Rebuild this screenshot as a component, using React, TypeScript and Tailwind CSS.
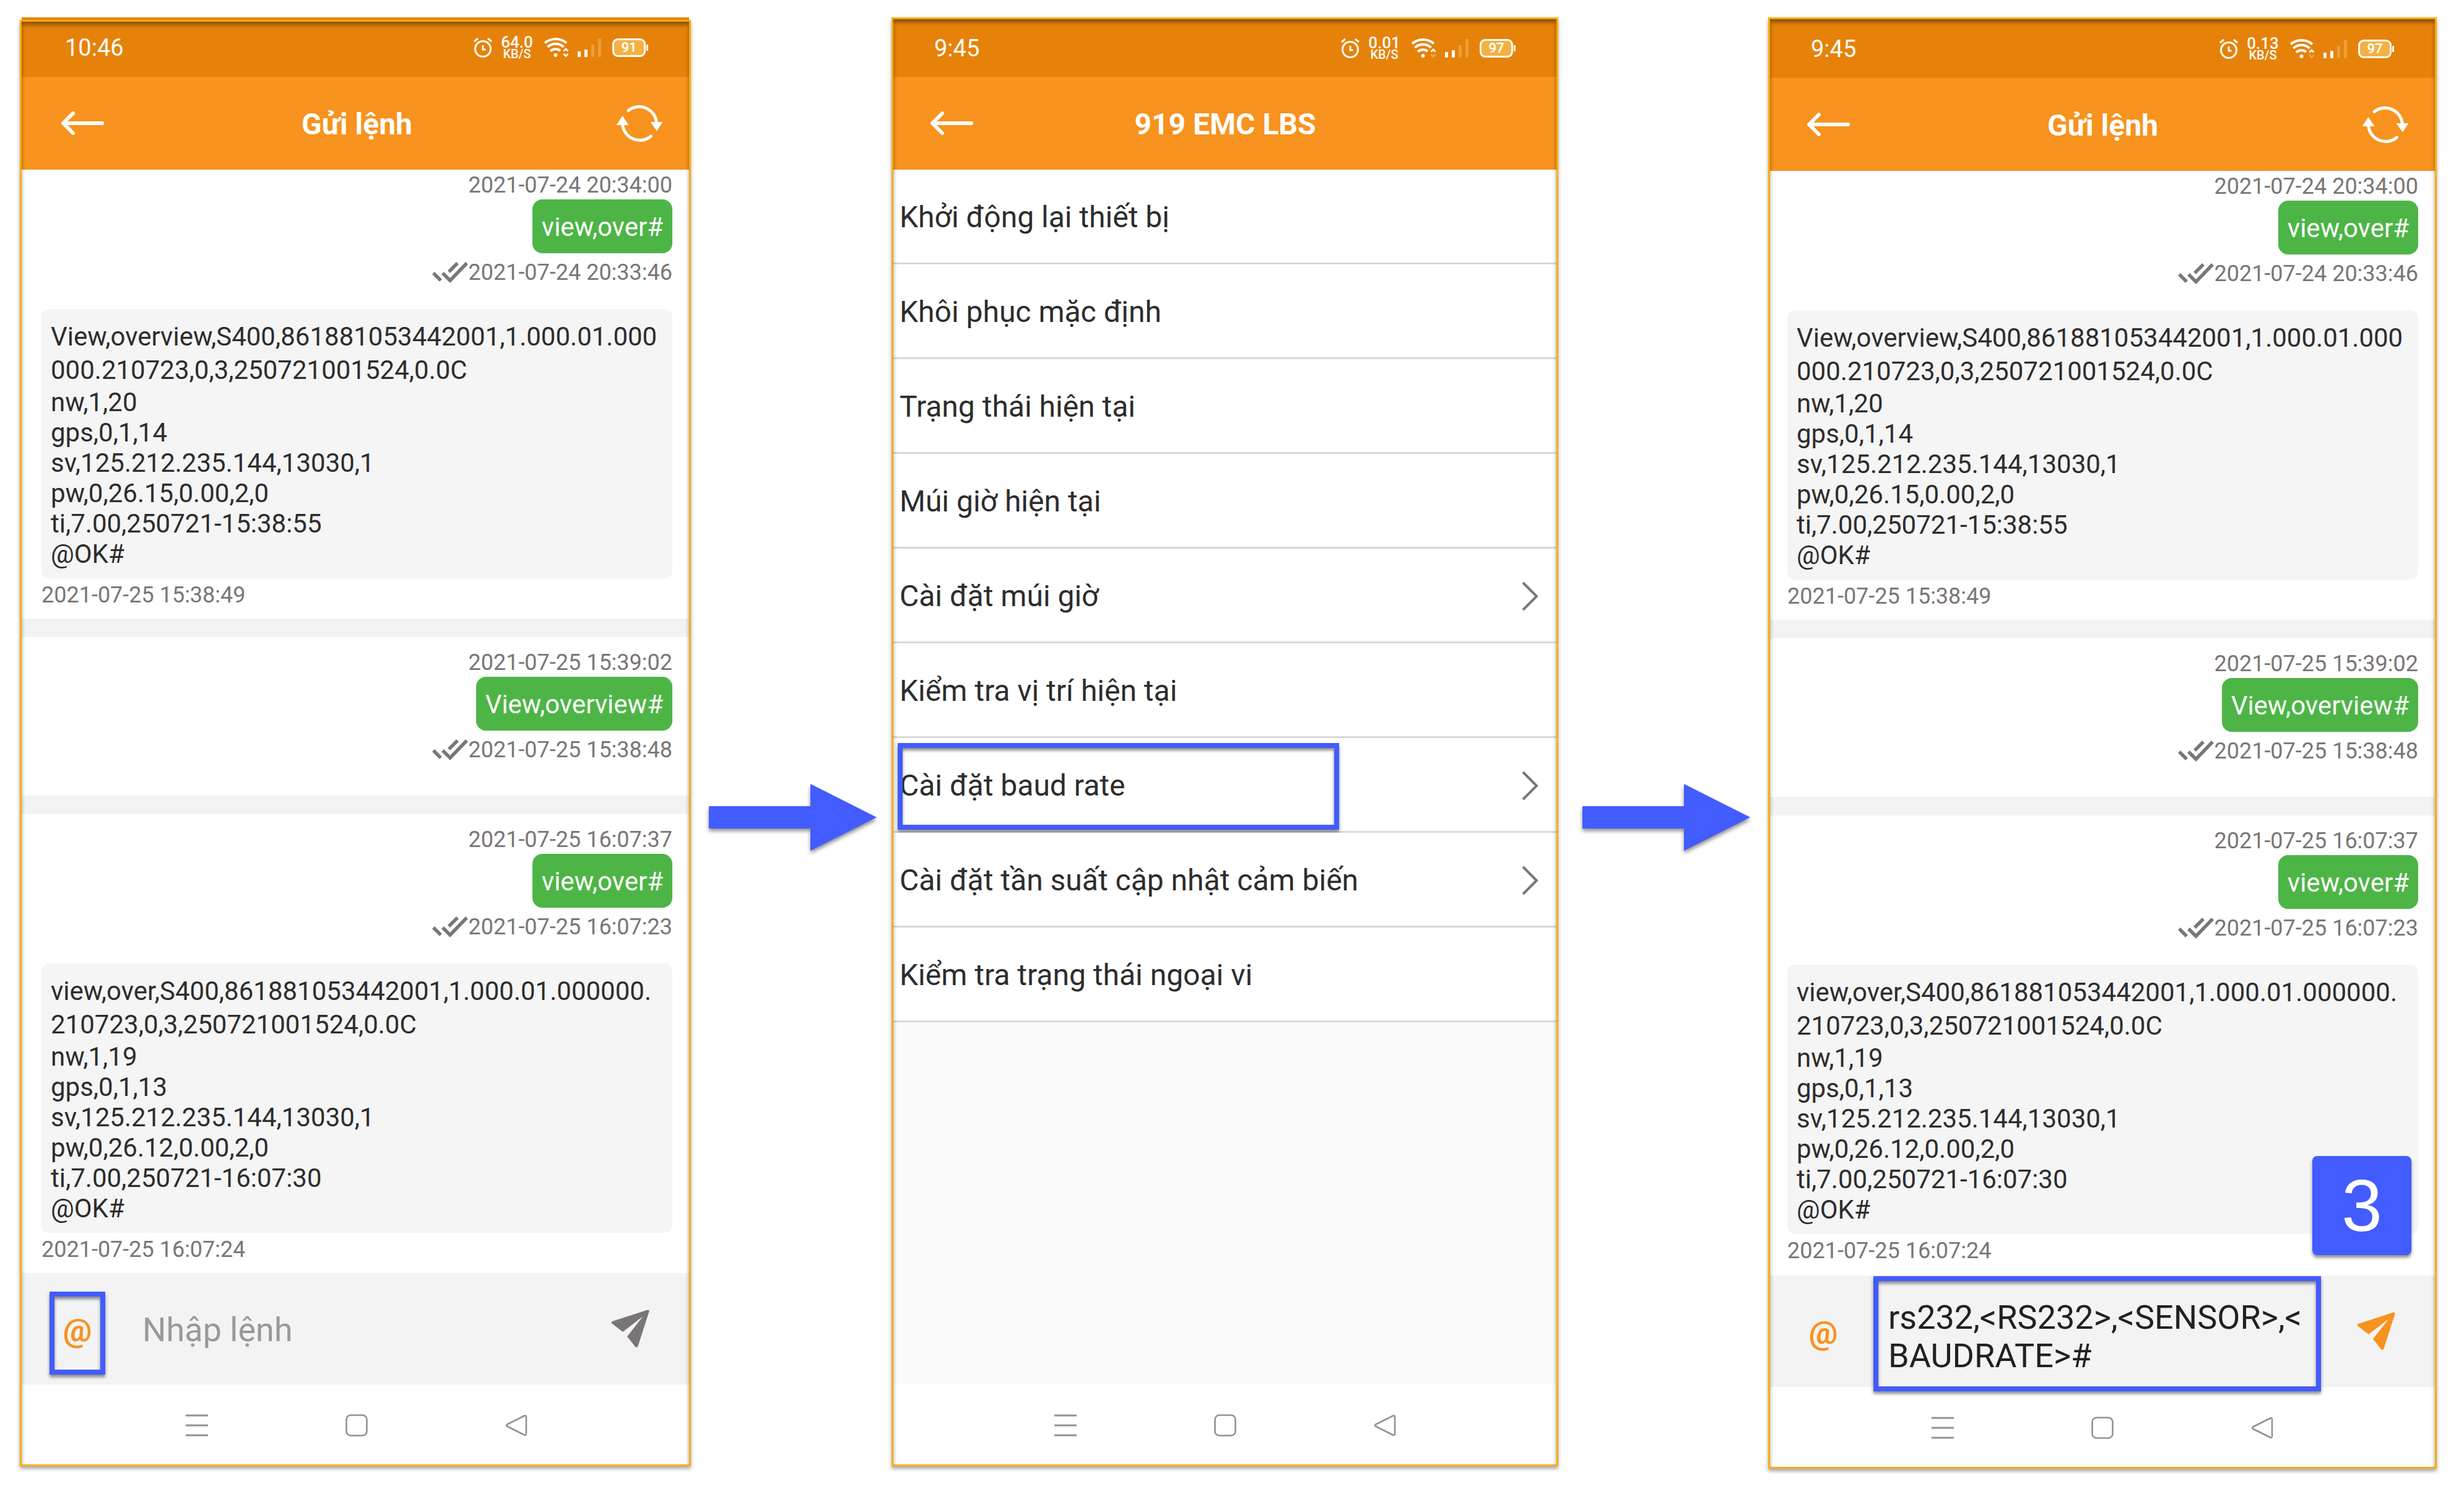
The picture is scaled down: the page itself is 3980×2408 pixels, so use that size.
import React from "react";

type StatusProps = { time: string; rate: string; battery: string; upOnly?: boolean; className: string };

const AlarmIcon = () => (
  <svg viewBox="0 0 30 32" className="h-8 w-[30px]" fill="none" stroke="#fff" strokeWidth="3">
    <circle cx="15" cy="18" r="12.5" />
    <path d="M15 12v7h4.500M1 6l6-5M29 6l-6-5" />
  </svg>
);

const WifiIcon = ({ upOnly }: { upOnly?: boolean }) => (
  <svg viewBox="0 0 40 32" className="h-8 w-10" fill="none" stroke="#fff" strokeWidth="4">
    <path d="M1 8.500a27 27 0 0 1 35 0M5.500 15a19 19 0 0 1 26 0M10 21.500a12 12 0 0 1 16 -.5" />
    <circle cx="18.500" cy="28" r="3" fill="#fff" stroke="none" />
    <path d="M31.500 21.500l3.500-3.500 3.500 3.500" strokeWidth="2.800" />
    <path d="M31.500 26l3.500 3.500 3.500-3.500" strokeWidth="2.800" opacity={upOnly ? 0.3 : 1} />
  </svg>
);

const SignalIcon = () => (
  <svg viewBox="0 0 39 30" className="h-[30px] w-[39px]" fill="#fff">
    <rect x="0" y="21" width="5" height="9" rx="1" />
    <rect x="11" y="18" width="5" height="12" rx="1" />
    <rect x="22" y="10" width="5" height="20" rx="1" opacity=".22" />
    <rect x="33" y="0" width="5" height="30" rx="1" opacity=".22" />
  </svg>
);

const StatusBar = ({ time, rate, battery, upOnly, className }: StatusProps) => (
  <div className={`flex shrink-0 items-center justify-between bg-[#e68209] pr-[66px] pl-[calc(66px+var(--inset))] text-white ${className}`}>
    <span className="text-[38px] leading-[44px]">{time}</span>
    <div className="flex items-center">
      <AlarmIcon />
      <div className="ml-[14px] w-[52px] text-center font-medium">
        <div className="text-[26px] leading-[20px]">{rate}</div>
        <div className="text-[20px] leading-[18px]">KB/S</div>
      </div>
      <div className="ml-[18px]"><WifiIcon upOnly={upOnly} /></div>
      <div className="ml-[14px]"><SignalIcon /></div>
      <div className="ml-[17px] flex h-[30px] w-[54px] items-center justify-center rounded-[9px] border-[3px] border-white bg-[#f4b243] text-[22px] leading-[24px] font-semibold">
        {battery}
      </div>
      <div className="ml-px h-[10px] w-[3px] bg-white" />
    </div>
  </div>
);

const Header = ({ title, refresh }: { title: string; refresh?: boolean }) => (
  <header className="grid h-[150px] shrink-0 grid-cols-[1fr_auto_1fr] items-center bg-[#f7931e] pr-[42px] pl-[calc(59px+var(--inset))] text-white">
    <button aria-label="Back" className="w-[72px]">
      <svg viewBox="0 0 72 40" className="h-10 w-[72px]" fill="none" stroke="#fff" strokeWidth="6" strokeLinecap="round" strokeLinejoin="round">
        <path d="M67 20H4M20 4L4 20l16 16" />
      </svg>
    </button>
    <h1 className="pt-1 pr-[16px] text-[48px] leading-[60px] font-bold">{title}</h1>
    {refresh ? (
      <button aria-label="Refresh" className="justify-self-end">
        <svg viewBox="0 0 76 62" className="h-[62px] w-[76px]" fill="none" stroke="#fff" strokeWidth="5" strokeLinecap="round">
          <path d="M20 10.500a28 28 0 0 1 45.500 21M10.500 31a28 28 0 0 0 46 21" />
          <path d="M55.500 29h20L66 43.500zM.5 34h20L10.500 19z" fill="#fff" stroke="none" />
        </svg>
      </button>
    ) : (
      <span />
    )}
  </header>
);

const NavBar = () => (
  <nav className="flex shrink-0 justify-center gap-[222px] pt-12 pb-[45px] pl-(--inset)">
    <button aria-label="Recent apps">
      <svg viewBox="0 0 36 36" className="size-9" stroke="#929292" strokeWidth="3"><path d="M0 2h36M0 18h36M0 34h36" /></svg>
    </button>
    <button aria-label="Home">
      <svg viewBox="0 0 36 36" className="size-9" fill="none" stroke="#929292" strokeWidth="2.600"><rect x="1.500" y="1.500" width="33" height="33" rx="7" /></svg>
    </button>
    <button aria-label="Back">
      <svg viewBox="0 0 36 36" className="size-9" fill="none" stroke="#929292" strokeWidth="2.600" strokeLinejoin="round"><path d="M31 2.500L3 16.500q-2 1.500 0 3L31 33.500q3 1 3-2V4.500q0-3-3-2z" /></svg>
    </button>
  </nav>
);

const Phone = ({ children, className }: { children: React.ReactNode; className: string }) => (
  <section
    className={`relative flex min-w-0 flex-col border-[3px] border-[#f9ae0b] bg-white shadow-[0_4px_6px_rgba(0,0,0,0.35)] after:pointer-events-none after:absolute after:inset-0 after:shadow-[inset_0_5px_6px_rgba(0,0,0,0.4)] ${className}`}
  >
    {children}
  </section>
);

const Checks = () => (
  <svg viewBox="0 0 58 34" className="h-[34px] w-[58px]" fill="none" stroke="#777" strokeWidth="5.500">
    <path d="M2 18l12 12M17 18l12 12L56 2M41 2L27 16" />
  </svg>
);

const Sent = ({ done, text, sent }: { done: string; text: string; sent: string }) => (
  <div className="flex flex-col items-end text-[#7a7676]">
    <time className="text-[36px] leading-[42px]">{done}</time>
    <p className="mt-[2px] rounded-[16px] bg-[#4db546] px-[15px] pt-[2px] text-[42px] leading-[85px] text-white">{text}</p>
    <div className="mt-[10px] flex items-center">
      <Checks />
      <time className="text-[36px] leading-[42px]">{sent}</time>
    </div>
  </div>
);

const Reply = ({ first, lines, time }: { first: string[]; lines: string[]; time: string }) => (
  <div className="mt-[38px]">
    <div className="rounded-[12px] bg-[#f5f5f5] px-[15px] pt-[18px] pb-[15px] text-[42px] text-[#2d2d2d]">
      {first.map((l) => <p key={l} className="leading-[54px] whitespace-nowrap">{l}</p>)}
      {lines.map((l) => <p key={l} className="leading-[49px]">{l}</p>)}
    </div>
    <time className="mt-[6px] block text-[36px] leading-[42px] text-[#7a7676]">{time}</time>
  </div>
);

const Gap = () => <div className="h-[30px] shrink-0 bg-[#f3f3f3]" />;

const Thread = ({ children, className }: { children: React.ReactNode; className: string }) => (
  <div className={`pr-[27px] pl-[calc(28px+var(--inset))] ${className}`}>{children}</div>
);

const Conversation = () => (
  <div className="flex-1">
    <Thread className="pt-1 pb-[17px]">
      <Sent done="2021-07-24 20:34:00" text="view,over#" sent="2021-07-24 20:33:46" />
      <Reply
        first={["View,overview,S400,861881053442001,1.000.01.000", "000.210723,0,3,250721001524,0.0C"]}
        lines={["nw,1,20", "gps,0,1,14", "sv,125.212.235.144,13030,1", "pw,0,26.15,0.00,2,0", "ti,7.00,250721-15:38:55", "@OK#"]}
        time="2021-07-25 15:38:49"
      />
    </Thread>
    <Gap />
    <Thread className="pt-5 pb-[53px]">
      <Sent done="2021-07-25 15:39:02" text="View,overview#" sent="2021-07-25 15:38:48" />
    </Thread>
    <Gap />
    <Thread className="pt-5 pb-[17px]">
      <Sent done="2021-07-25 16:07:37" text="view,over#" sent="2021-07-25 16:07:23" />
      <Reply
        first={["view,over,S400,861881053442001,1.000.01.000000.", "210723,0,3,250721001524,0.0C"]}
        lines={["nw,1,19", "gps,0,1,13", "sv,125.212.235.144,13030,1", "pw,0,26.12,0.00,2,0", "ti,7.00,250721-16:07:30", "@OK#"]}
        time="2021-07-25 16:07:24"
      />
    </Thread>
  </div>
);

const SendIcon = ({ className }: { className: string }) => (
  <svg viewBox="0 0 62 62" className={`size-[62px] ${className}`} fill="currentColor">
    <path d="M59 .5Q62 0 61.500 3L43.500 59q-1 3-4 1.500L26 43.500 51.500 11 19 36 1.500 22.500Q-.5 20.500 2 19z" />
  </svg>
);

const Arrow = ({ className }: { className: string }) => (
  <div className={`mt-[1256px] flex justify-center ${className}`}>
    <svg viewBox="0 0 290 130" className="h-[130px] w-[290px] shrink-0 drop-shadow-[0_4px_3px_rgba(0,0,0,0.45)]">
      <path d="M8 46h164V10l107 54-107 54V82H8z" fill="#425cff" />
    </svg>
  </div>
);

const ring = "border-8 border-[#425cff] shadow-[0_4px_5px_rgba(0,0,0,0.45),inset_0_4px_5px_rgba(0,0,0,0.45)]";

const menu: { label: string; more?: boolean; marked?: boolean }[] = [
  { label: "Khởi động lại thiết bị" },
  { label: "Khôi phục mặc định" },
  { label: "Trạng thái hiện tại" },
  { label: "Múi giờ hiện tại" },
  { label: "Cài đặt múi giờ", more: true },
  { label: "Kiểm tra vị trí hiện tại" },
  { label: "Cài đặt baud rate", more: true, marked: true },
  { label: "Cài đặt tần suất cập nhật cảm biến", more: true },
  { label: "Kiểm tra trạng thái ngoại vi" },
];

export default function App() {
  return (
    <main className="grid min-h-screen grid-cols-[1084fr_324fr_1077fr_339fr_1080fr] bg-white pr-[44px] pb-9 pl-8 font-[Roboto,'Liberation_Sans',sans-serif]">
      <Phone className="mt-8 mb-1 [--inset:4px] before:absolute before:inset-x-0 before:-top-[7px] before:h-1 before:bg-[#e68209]">
        <StatusBar time="10:46" rate="64.0" battery="91" className="h-[89px] pb-[6px]" />
        <Header title="Gửi lệnh" refresh />
        <Conversation />
        <form className="flex h-[180px] shrink-0 items-center bg-[#f3f3f3] pr-16 pl-[calc(41px+var(--inset))]">
          <button type="button" className={`mt-[14px] h-[134px] w-[90px] pb-2 text-[52px] font-bold text-[#f7931e] ${ring}`}>@</button>
          <input aria-label="Nhập lệnh" placeholder="Nhập lệnh" className="ml-[60px] min-w-0 flex-1 bg-transparent pt-1 text-[54px] leading-[62px] placeholder:text-[#999]" />
          <button type="button" aria-label="Send"><SendIcon className="text-[#7a7676]" /></button>
        </form>
        <NavBar />
      </Phone>
      <Arrow className="pl-2" />
      <Phone className="mt-7 mb-1 [--inset:0px]">
        <StatusBar time="9:45" rate="0.01" battery="97" upOnly className="h-[93px]" />
        <Header title="919 EMC LBS" />
        <ul className="flex-1 bg-[#fafafa]">
          {menu.map((m) => (
            <li key={m.label} className="relative border-b-[3px] border-[#d9d9d9] bg-white">
              <button className="flex h-[150px] w-full items-center justify-between pt-1 pr-7 pl-[10px] text-left text-[48px] leading-[60px] text-[#2d2d2d]">
                {m.label}
                {m.more && (
                  <svg viewBox="0 0 28 48" className="h-12 w-7" fill="none" stroke="#777" strokeWidth="4"><path d="M2 2l22 22L2 46" /></svg>
                )}
              </button>
              {m.marked && <div className={`pointer-events-none absolute top-2 left-[7px] h-[140px] w-[713px] ${ring}`} />}
            </li>
          ))}
        </ul>
        <NavBar />
      </Phone>
      <Arrow className="pl-3" />
      <Phone className="mt-7 [--inset:0px]">
        <StatusBar time="9:45" rate="0.13" battery="97" upOnly className="h-[95px]" />
        <Header title="Gửi lệnh" refresh />
        <Conversation />
        <form className="relative flex h-[180px] shrink-0 items-center bg-[#f3f3f3] pr-16 pl-[41px]">
          <button type="button" className="mt-[14px] w-[90px] pb-2 text-[52px] font-bold text-[#f7931e]">@</button>
          <textarea
            aria-label="Nhập lệnh"
            defaultValue="rs232,<RS232>,<SENSOR>,<BAUDRATE>#"
            className={`mt-2 mr-[58px] ml-9 h-[186px] min-w-0 flex-1 shrink-0 resize-none overflow-hidden pt-7 pr-1 pl-4 text-[54px] leading-[62px] break-all text-[#212121] ${ring}`}
          />
          <button type="button" aria-label="Send"><SendIcon className="text-[#f7931e]" /></button>
          <span className="absolute right-[38px] bottom-[213px] flex size-40 items-center justify-center rounded-[8px] bg-[#425cff] font-['Liberation_Sans'] text-[118px] text-white shadow-[0_4px_5px_rgba(0,0,0,0.45)]">3</span>
        </form>
        <NavBar />
      </Phone>
    </main>
  );
}
